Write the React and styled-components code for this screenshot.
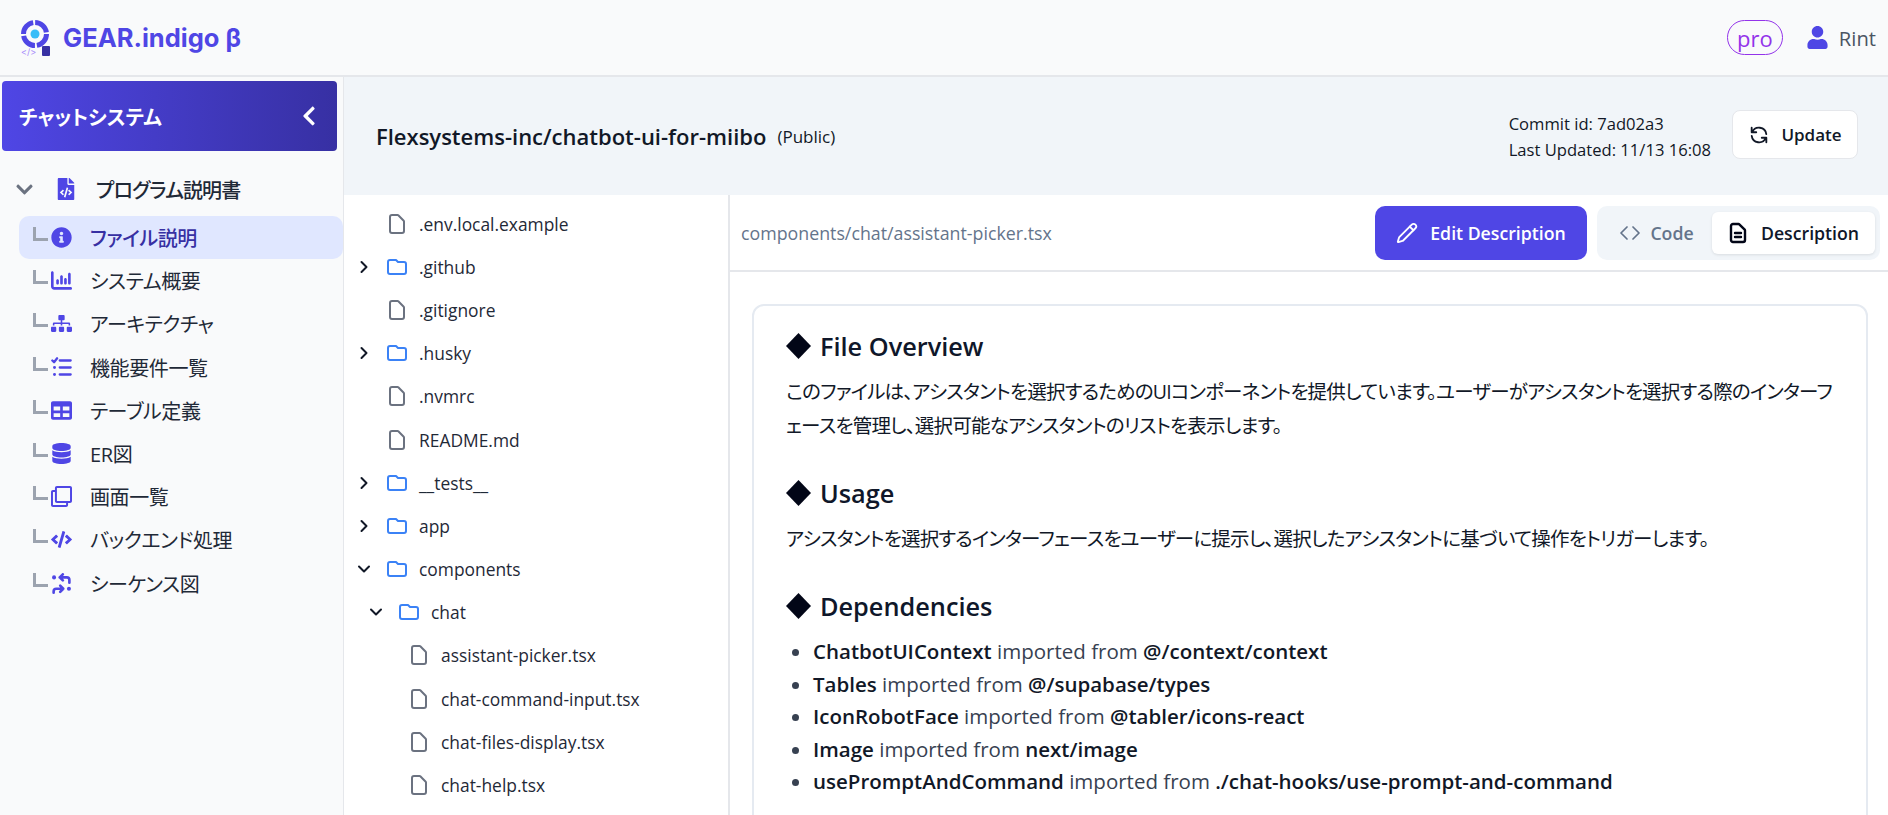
import React from 'react'
import styled, { createGlobalStyle } from 'styled-components'
import {
  FaChevronDown, FaChevronLeft, FaFileCode, FaInfoCircle, FaSitemap, FaTable, FaDatabase, FaRegClone, FaCode, FaUser,
} from 'react-icons/fa'
import { FaChartColumn } from 'react-icons/fa6'
import { HiOutlineDocument, HiOutlineFolder, HiOutlineRefresh, HiOutlineDocumentText } from 'react-icons/hi'
import { LuChevronRight, LuChevronDown, LuPencil } from 'react-icons/lu'

const SANS = `"Open Sans", "Noto Sans", "Noto Sans CJK JP", sans-serif`

const GlobalStyle = createGlobalStyle`
  html, body { margin: 0; padding: 0; height: 100%; overflow: hidden; background: #fff; }
  * { box-sizing: border-box; }
  body { font-family: ${SANS}; color: #1f2937; font-feature-settings: "palt"; }
`

const Page = styled.div`
  width: 1888px;
  height: 815px;
  display: flex;
  flex-direction: column;
  overflow: hidden;
`
const TopBar = styled.header`
  height: 77px;
  flex: none;
  display: flex;
  align-items: center;
  justify-content: space-between;
  padding: 0 12px 0 20px;
  background: #f9fafb;
  border-bottom: 2px solid #e5e7eb;
`
const Brand = styled.div`
  display: flex;
  align-items: center;
  gap: 11px;
`
const BrandName = styled.span`
  font-family: Inter, sans-serif;
  font-size: 25.5px;
  font-weight: 700;
  color: #4f46e5;
`
const Account = styled.div`
  display: flex;
  align-items: center;
`
const ProBadge = styled.span`
  width: 56px;
  height: 35px;
  display: flex;
  align-items: center;
  justify-content: center;
  border: 1px solid #9333ea;
  border-radius: 18px;
  color: #9333ea;
  font-size: 22px;
  line-height: 1;
  margin-right: 23px;
`
const UserName = styled.span`
  font-size: 20.2px;
  color: #4b5563;
  margin-left: 10px;
`
const Body = styled.div`
  flex: 1;
  display: flex;
  min-height: 0;
`
const Sidebar = styled.aside`
  width: 344px;
  flex: none;
  background: #f9fafb;
  border-right: 1px solid #e5e7eb;
  padding: 4px 0 0 2px;
`
const SideHeader = styled.div`
  width: 335px;
  height: 70px;
  display: flex;
  align-items: center;
  justify-content: space-between;
  padding: 0 17px 0 17px;
  border-radius: 4px;
  color: #fff;
  font-size: 20px;
  font-weight: 700;
  background: linear-gradient(90deg, #4f46e5, #3730a3);
`
const SideGroup = styled.div`
  height: 50px;
  margin: 13px 0 2px;
  display: flex;
  align-items: center;
  padding-left: 13px;
  font-size: 20px;
  font-weight: 500;
  letter-spacing: -0.9px;
  color: #1f2937;
  svg:first-child { color: #6b7280; font-size: 19px; margin-right: 21px; }
  svg:nth-child(2) { color: #4f46e5; font-size: 22px; margin-right: 19px; }
`
const SideList = styled.ul`
  list-style: none;
  margin: 0;
  padding: 0 0 0 17px;
`
const SideItem = styled.li`
  position: relative;
  height: 43.2px;
  display: flex;
  align-items: center;
  padding-left: 32px;
  border-radius: 10px;
  font-size: 20px;
  letter-spacing: -0.4px;
  color: ${p => (p.$active ? '#3730a3' : '#1f2937')};
  font-weight: ${p => (p.$active ? 500 : 400)};
  background: ${p => (p.$active ? '#e0e7ff' : 'transparent')};
  svg { width: 21px; height: 21px; color: #4f46e5; margin-right: 18px; flex: none; }
  &::before {
    content: '';
    position: absolute;
    left: 14px;
    top: 11px;
    width: 12px;
    height: 11px;
    border-left: 3px solid #9ca3af;
    border-bottom: 3px solid #9ca3af;
  }
`
const Main = styled.main`
  flex: 1;
  min-width: 0;
  display: flex;
  flex-direction: column;
`
const RepoBar = styled.div`
  height: 118px;
  flex: none;
  display: flex;
  align-items: center;
  padding: 0 30px 0 32px;
  background: #f1f5f9;
`
const RepoName = styled.h1`
  margin: 0;
  font-size: 22px;
  font-weight: 600;
  color: #111827;
`
const RepoScope = styled.span`
  margin-left: 11px;
  font-size: 17px;
  color: #111827;
`
const CommitInfo = styled.div`
  margin-left: auto;
  margin-right: 21px;
  padding-top: 2px;
  font-size: 16.6px;
  line-height: 26.5px;
  color: #111827;
`
const UpdateButton = styled.button`
  height: 49px;
  width: 126px;
  margin-top: -3px;
  display: flex;
  align-items: center;
  justify-content: center;
  gap: 11px;
  background: #fff;
  border: 1px solid #e5e7eb;
  border-radius: 8px;
  font: 600 17px ${SANS};
  color: #111827;
  svg { width: 22px; height: 22px; }
`
const Split = styled.div`
  flex: 1;
  display: flex;
  min-height: 0;
`
const TreePanel = styled.nav`
  width: 386px;
  flex: none;
  padding: 7px 0 0 10px;
  background: #fff;
  border-right: 2px solid #e5e7eb;
`
const TreeRow = styled.div`
  height: 43.2px;
  display: flex;
  align-items: center;
  padding-left: ${p => p.$indent}px;
  font-size: 17.4px;
  color: #1f2937;
`
const Caret = styled.span`
  width: 31px;
  flex: none;
  display: flex;
  svg { width: 20px; height: 20px; color: #111827; stroke-width: 2.4; }
`
const NodeIcon = styled.span`
  width: 24px;
  margin-right: 10px;
  flex: none;
  display: flex;
  color: ${p => (p.$folder ? '#3b82f6' : '#6b7280')};
  svg { width: 24px; height: 24px; }
`
const Content = styled.section`
  flex: 1;
  min-width: 0;
  display: flex;
  flex-direction: column;
`
const Toolbar = styled.div`
  height: 77px;
  flex: none;
  display: flex;
  align-items: center;
  padding: 0 8px 0 11px;
  border-bottom: 2px solid #e5e7eb;
`
const FilePath = styled.span`
  font-size: 17.8px;
  color: #64748b;
  margin-right: auto;
`
const EditButton = styled.button`
  width: 212px;
  height: 54px;
  display: flex;
  align-items: center;
  justify-content: center;
  gap: 12px;
  border: 0;
  border-radius: 10px;
  background: #4f46e5;
  color: #fff;
  font: 600 17.7px ${SANS};
  svg { width: 22px; height: 22px; }
`
const Tabs = styled.div`
  width: 283px;
  height: 54px;
  margin-left: 10px;
  padding: 6px 5px;
  display: flex;
  border-radius: 10px;
  background: #f1f5f9;
`
const Tab = styled.div`
  flex: ${p => (p.$active ? '0 0 163px' : '1')};
  display: flex;
  align-items: center;
  justify-content: center;
  gap: ${p => (p.$active ? '11px' : '10px')};
  padding-right: ${p => (p.$active ? '2px' : '0')};
  border-radius: 6px;
  font-size: 17.7px;
  font-weight: 600;
  color: ${p => (p.$active ? '#0f172a' : '#64748b')};
  background: ${p => (p.$active ? '#fff' : 'transparent')};
  box-shadow: ${p => (p.$active ? '0 1px 3px rgba(0,0,0,.1)' : 'none')};
  svg.doc { width: 24px; height: 24px; stroke-width: 2.4; color: #020617; }
`
const Scroller = styled.div`
  flex: 1;
  min-height: 0;
  overflow: hidden;
  padding: 32px 20px 0 22px;
`
const Card = styled.article`
  border: 2px solid #e5eaf1;
  border-radius: 12px;
  padding: 22px 22px 28px 32px;
  min-height: 600px;
`
const Heading = styled.h2`
  margin: 0 0 11px;
  font-size: 25.3px;
  line-height: 36px;
  font-weight: 600;
  color: #0f172a;
  display: flex;
  align-items: center;
  gap: 9px;
`
const Diamond = styled.svg`
  width: 25px;
  height: 26px;
  flex: none;
`
const Para = styled.p`
  margin: 0 0 32px;
  font-size: 19.5px;
  letter-spacing: -0.77px;
  line-break: loose;
  line-height: 34px;
  color: #111827;
`
const DepList = styled.ul`
  margin: 0;
  padding-left: 27px;
  font-size: 20.5px;
  line-height: 32.5px;
  color: #374151;
  b { font-weight: 600; color: #111827; }
`

const Logo = () => (
  <svg width="32" height="38" viewBox="0 0 32 38">
    <circle cx="15" cy="15" r="11.5" fill="none" stroke="#4f46e5" strokeWidth="5" strokeDasharray="16 2" />
    <circle cx="15" cy="15" r="4.5" fill="#38bdf8" />
    <rect x="22" y="27" width="8" height="10" rx="1" fill="#3730a3" />
    <text x="1" y="36" fontSize="9" fill="#a78bfa" fontFamily="Inter, sans-serif">&lt;/&gt;</text>
  </svg>
)

const ChecklistIcon = () => (
  <svg viewBox="0 0 24 24" fill="none" stroke="currentColor" strokeWidth="2.6" strokeLinecap="round" strokeLinejoin="round">
    <path d="M1.5 4 3.5 6 7 1.5" />
    <circle cx="4" cy="12" r="1.7" fill="currentColor" stroke="none" />
    <circle cx="4" cy="20" r="1.7" fill="currentColor" stroke="none" />
    <path d="M10 4h12.5M10 12h12.5M10 20h12.5" />
  </svg>
)

const SequenceIcon = () => (
  <svg viewBox="0 0 24 24" fill="none" stroke="currentColor" strokeWidth="3" strokeLinecap="round" strokeLinejoin="round">
    <circle cx="3.5" cy="5" r="2.3" fill="currentColor" stroke="none" />
    <circle cx="20.5" cy="18" r="2.3" fill="currentColor" stroke="none" />
    <path d="M13.5 1.5 10 5l3.5 3.5M10 5h8a3 3 0 0 1 3 3v3" />
    <path d="M10.5 14.5 14 18l-3.5 3.5M14 18H6a3 3 0 0 0-3 3v1.5" />
  </svg>
)

const AngleBrackets = () => (
  <svg width="20" height="14" viewBox="0 0 20 14" fill="none" stroke="currentColor" strokeWidth="1.7" strokeLinecap="round" strokeLinejoin="round">
    <path d="M7 1 1 7l6 6M13 1l6 6-6 6" />
  </svg>
)

const sideItems = [
  { label: 'ファイル説明', Icon: FaInfoCircle, active: true },
  { label: 'システム概要', Icon: FaChartColumn },
  { label: 'アーキテクチャ', Icon: FaSitemap },
  { label: '機能要件一覧', Icon: ChecklistIcon },
  { label: 'テーブル定義', Icon: FaTable },
  { label: 'ER図', Icon: FaDatabase },
  { label: '画面一覧', Icon: FaRegClone },
  { label: 'バックエンド処理', Icon: FaCode },
  { label: 'シーケンス図', Icon: SequenceIcon },
]

const tree = [
  { name: '.env.local.example', indent: 0 },
  { name: '.github', indent: 0, folder: 'closed' },
  { name: '.gitignore', indent: 0 },
  { name: '.husky', indent: 0, folder: 'closed' },
  { name: '.nvmrc', indent: 0 },
  { name: 'README.md', indent: 0 },
  { name: '__tests__', indent: 0, folder: 'closed' },
  { name: 'app', indent: 0, folder: 'closed' },
  { name: 'components', indent: 0, folder: 'open' },
  { name: 'chat', indent: 12, folder: 'open' },
  { name: 'assistant-picker.tsx', indent: 22 },
  { name: 'chat-command-input.tsx', indent: 22 },
  { name: 'chat-files-display.tsx', indent: 22 },
  { name: 'chat-help.tsx', indent: 22 },
]

const deps = [
  ['ChatbotUIContext', '@/context/context'],
  ['Tables', '@/supabase/types'],
  ['IconRobotFace', '@tabler/icons-react'],
  ['Image', 'next/image'],
  ['usePromptAndCommand', './chat-hooks/use-prompt-and-command'],
]

const SectionTitle = ({ children }) => (
  <Heading>
    <Diamond viewBox="0 0 25 26"><path d="M12.5 0 25 13 12.5 26 0 13Z" fill="#020617" /></Diamond>
    {children}
  </Heading>
)

export default function App() {
  return (
    <Page>
      <GlobalStyle />
      <TopBar>
        <Brand>
          <Logo />
          <BrandName>GEAR.indigo β</BrandName>
        </Brand>
        <Account>
          <ProBadge>pro</ProBadge>
          <FaUser size={23} color="#4f46e5" />
          <UserName>Rint</UserName>
        </Account>
      </TopBar>
      <Body>
        <Sidebar>
          <SideHeader>
            チャットシステム
            <FaChevronLeft size={22} />
          </SideHeader>
          <SideGroup>
            <FaChevronDown />
            <FaFileCode />
            プログラム説明書
          </SideGroup>
          <SideList>
            {sideItems.map(({ label, Icon, active }) => (
              <SideItem key={label} $active={active}>
                <Icon />
                {label}
              </SideItem>
            ))}
          </SideList>
        </Sidebar>
        <Main>
          <RepoBar>
            <RepoName>Flexsystems-inc/chatbot-ui-for-miibo</RepoName>
            <RepoScope>(Public)</RepoScope>
            <CommitInfo>
              Commit id: 7ad02a3
              <br />
              Last Updated: 11/13 16:08
            </CommitInfo>
            <UpdateButton><HiOutlineRefresh />Update</UpdateButton>
          </RepoBar>
          <Split>
            <TreePanel>
              {tree.map(node => (
                <TreeRow key={node.name} $indent={node.indent}>
                  <Caret>
                    {node.folder === 'closed' && <LuChevronRight />}
                    {node.folder === 'open' && <LuChevronDown />}
                  </Caret>
                  <NodeIcon $folder={!!node.folder}>
                    {node.folder ? <HiOutlineFolder /> : <HiOutlineDocument />}
                  </NodeIcon>
                  {node.name}
                </TreeRow>
              ))}
            </TreePanel>
            <Content>
              <Toolbar>
                <FilePath>components/chat/assistant-picker.tsx</FilePath>
                <EditButton><LuPencil />Edit Description</EditButton>
                <Tabs>
                  <Tab><AngleBrackets />Code</Tab>
                  <Tab $active><HiOutlineDocumentText className="doc" />Description</Tab>
                </Tabs>
              </Toolbar>
              <Scroller>
                <Card>
                  <SectionTitle>File Overview</SectionTitle>
                  <Para>このファイルは、アシスタントを選択するためのUIコンポーネントを提供しています。ユーザーがアシスタントを選択する際のインターフェースを管理し、選択可能なアシスタントのリストを表示します。</Para>
                  <SectionTitle>Usage</SectionTitle>
                  <Para>アシスタントを選択するインターフェースをユーザーに提示し、選択したアシスタントに基づいて操作をトリガーします。</Para>
                  <SectionTitle>Dependencies</SectionTitle>
                  <DepList>
                    {deps.map(([name, from]) => (
                      <li key={name}><b>{name}</b> imported from <b>{from}</b></li>
                    ))}
                  </DepList>
                </Card>
              </Scroller>
            </Content>
          </Split>
        </Main>
      </Body>
    </Page>
  )
}
